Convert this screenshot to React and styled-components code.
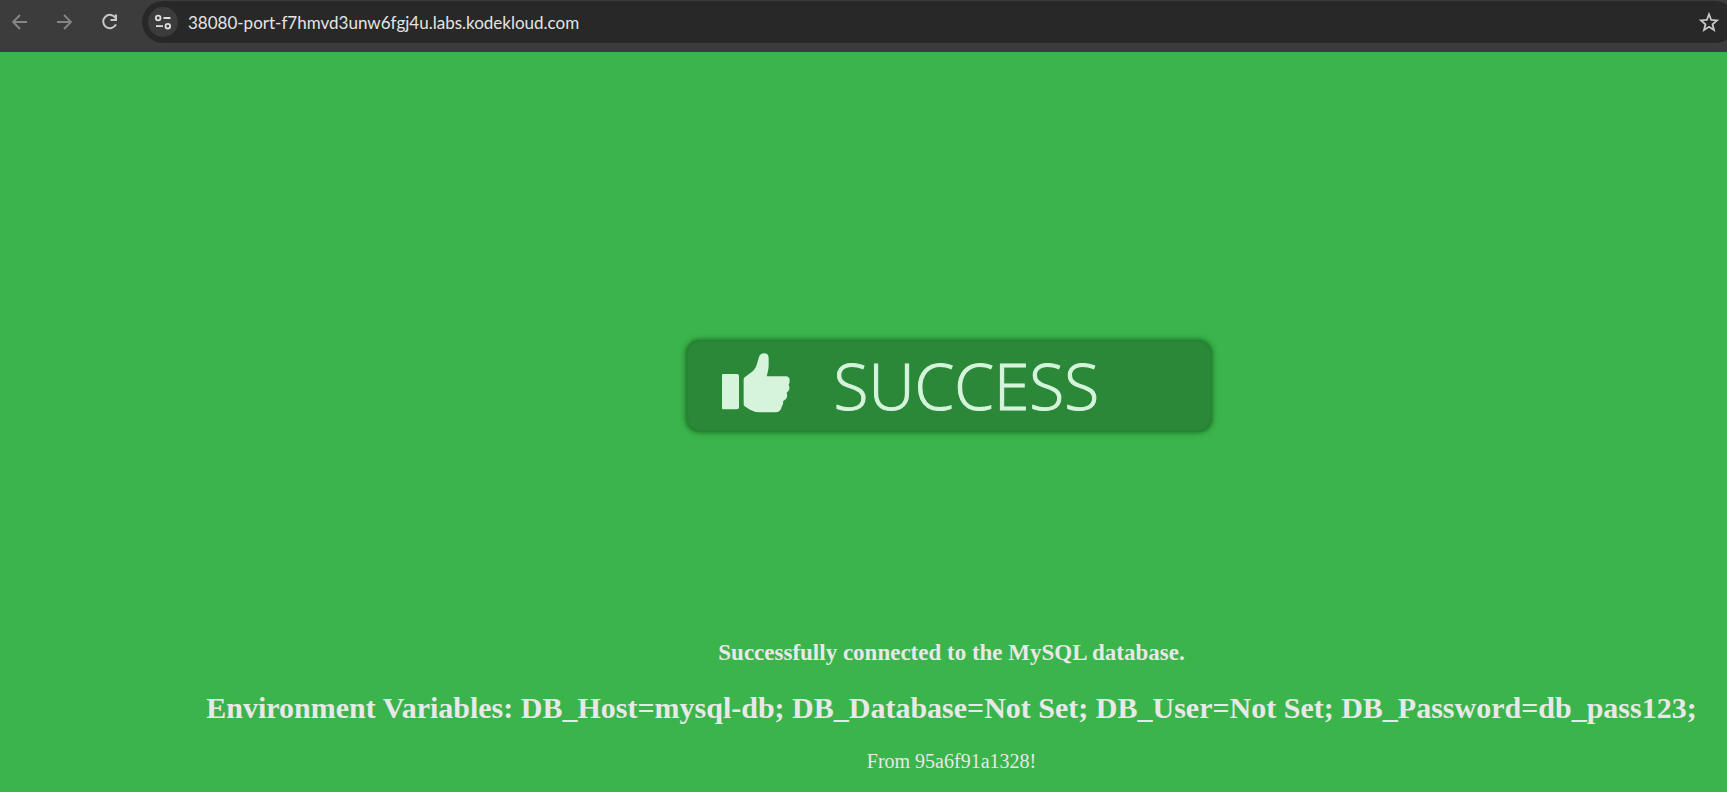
import React from "react";
import styled, { createGlobalStyle } from "styled-components";

const GlobalStyle = createGlobalStyle`
  *, *::before, *::after { box-sizing: border-box; }
  body { margin: 0; background: #3bb44b; }
`;

const Screen = styled.div`
  display: flex;
  flex-direction: column;
  min-height: 100vh;
  overflow: hidden;
`;

const Toolbar = styled.header`
  display: flex;
  align-items: flex-start;
  height: 52px;
  padding: 1px 0 0 8px;
  background: #3c3c3c;
`;

const NavButtons = styled.nav`
  display: flex;
  gap: 21px;
  padding-top: 10px;
`;

const IconButton = styled.button`
  display: flex;
  align-items: center;
  justify-content: center;
  width: 24px;
  height: 24px;
  padding: 0;
  border: 0;
  background: none;
  color: ${(p) => (p.$dim ? "#868686" : "#c8c8c8")};
`;

const AddressBar = styled.div`
  display: flex;
  flex: 1;
  align-items: center;
  height: 42px;
  margin: 0 -9px 0 20px;
  padding: 0 15px 0 6px;
  border-radius: 21px;
  background: #282828;
`;

const SiteInfoButton = styled(IconButton)`
  width: 30px;
  height: 30px;
  border-radius: 50%;
  background: #3c3c3c;
  color: #dedede;
`;

const AddressInput = styled.input`
  flex: 1;
  min-width: 0;
  height: 30px;
  margin-left: 10px;
  padding: 0;
  border: 0;
  outline: 0;
  background: transparent;
  color: #e4e4e4;
  font: 17px Lato, "Open Sans", sans-serif;
`;

const Page = styled.main`
  display: flex;
  flex: 1;
  flex-direction: column;
  align-items: center;
  padding-left: 176px;
  color: #e8e8e8;
  font-family: "Liberation Serif", "Times New Roman", serif;
  text-align: center;
`;

const BannerArea = styled.div`
  padding: 288px 6px 207px 0;
`;

const Banner = styled.div`
  display: flex;
  align-items: flex-start;
  gap: 44px;
  width: 526px;
  height: 92px;
  padding: 0 36px;
  border-radius: 14px;
  background: #2b8838;
  box-shadow: 0 0 5px 1px #1f782c, inset 0 0 3px #217a2e;
  color: #d6f3dc;
`;

const BannerLabel = styled.span`
  font: 300 64px/92px "Open Sans", "Noto Sans", sans-serif;
  -webkit-text-stroke: 1px currentColor;
`;

const Status = styled.h3`
  margin: 0;
  font-size: 23px;
  line-height: 28px;
`;

const Variables = styled.h2`
  margin: 23px 0;
  font-size: 30px;
  line-height: 36px;
`;

const Origin = styled.p`
  margin: 0;
  font-size: 20px;
  line-height: 24px;
`;

const ThumbHolder = styled.div`
  padding-top: 13px;
  line-height: 0;
`;

const BackIcon = () => (
  <svg width="24" height="24" viewBox="0 0 24 24" fill="none" stroke="currentColor" strokeWidth="1.8" aria-hidden="true">
    <path d="M19 11H5M12 4L5 11L12 18" />
  </svg>
);

const ForwardIcon = () => (
  <svg width="24" height="24" viewBox="0 0 24 24" fill="none" stroke="currentColor" strokeWidth="1.8" aria-hidden="true">
    <path d="M4 11H18M11 4L18 11L11 18" />
  </svg>
);

const ReloadIcon = () => (
  <svg width="24" height="24" viewBox="0 0 24 24" fill="none" stroke="currentColor" strokeWidth="2" aria-hidden="true">
    <path d="M17.6 7A6.7 6.7 0 1 0 18 13.4M18 3.5V9H12.5" />
  </svg>
);

const TuneIcon = () => (
  <svg width="18" height="18" viewBox="0 0 18 18" fill="none" stroke="currentColor" strokeWidth="1.8" aria-hidden="true">
    <circle cx="4.2" cy="5" r="2.3" />
    <path d="M9.5 5H16.5M2 13.2H9" />
    <circle cx="13.8" cy="13.2" r="2.3" />
  </svg>
);

const StarIcon = () => (
  <svg width="24" height="24" viewBox="0 0 24 24" fill="none" stroke="currentColor" strokeWidth="1.8" aria-hidden="true">
    <path d="M12 4.2L14.2 10L20 10.4L15.5 14.2L17 20L12 16.8L7 20L8.5 14.2L4 10.4L9.8 10Z" />
  </svg>
);

const ThumbIcon = () => (
  <svg width="68" height="60" viewBox="0 0 204 180" fill="currentColor" aria-hidden="true">
    <path d="M3 63H45Q51 63 51 69V163Q51 169 45 169H3Q0 169 0 166V66Q0 63 3 63Z" />
    <path d="M65 79Q65 75 69 72L94 53Q100 47 104 36L111 12Q115 1 126 1Q139 1 140 14V37Q140 49 134 70H191Q203 71 203 82Q203 91 200 95Q205 107 199 114L194 119Q198 130 192 138L183 145Q185 153 180 159Q176 178 160 178H113Q99 178 84 170L67 159Q65 158 65 154Z" />
  </svg>
);

export default function App() {
  return (
    <Screen>
      <GlobalStyle />
      <Toolbar>
        <NavButtons aria-label="Browser navigation">
          <IconButton type="button" $dim aria-label="Back"><BackIcon /></IconButton>
          <IconButton type="button" $dim aria-label="Forward"><ForwardIcon /></IconButton>
          <IconButton type="button" aria-label="Reload"><ReloadIcon /></IconButton>
        </NavButtons>
        <AddressBar>
          <SiteInfoButton type="button" aria-label="View site information"><TuneIcon /></SiteInfoButton>
          <AddressInput
            type="text"
            aria-label="Address"
            spellCheck={false}
            defaultValue="38080-port-f7hmvd3unw6fgj4u.labs.kodekloud.com"
          />
          <IconButton type="button" aria-label="Bookmark this page"><StarIcon /></IconButton>
        </AddressBar>
      </Toolbar>
      <Page>
        <BannerArea>
          <Banner>
            <ThumbHolder><ThumbIcon /></ThumbHolder>
            <BannerLabel>SUCCESS</BannerLabel>
          </Banner>
        </BannerArea>
        <Status>Successfully connected to the MySQL database.</Status>
        <Variables>
          Environment Variables: DB_Host=mysql-db; DB_Database=Not Set; DB_User=Not Set; DB_Password=db_pass123;
        </Variables>
        <Origin>From 95a6f91a1328!</Origin>
      </Page>
    </Screen>
  );
}
